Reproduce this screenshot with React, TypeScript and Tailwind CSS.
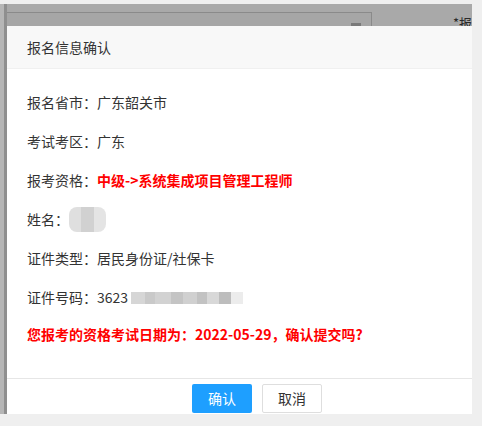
const font = { fontFamily: '"Noto Sans CJK SC", "Liberation Sans", sans-serif' };

const Row = ({ label, children }: { label: string; children: React.ReactNode }) => (
  <div className="flex h-[39px] items-center text-[14px] text-[#333]">
    <span>{label}</span>
    {children}
  </div>
);

export default function App() {
  return (
    <div className="flex h-[426px] w-[482px] flex-col bg-[#efefef]" style={font}>
      <div className="h-[4px] shrink-0" />
      <div className="flex h-[410px] shrink-0">
        {/* shaded page behind the layer */}
        <div className="relative flex w-[472px]">
          <div className="w-[4px] bg-[#b6b6b6]" />
          <div className="w-[3px] bg-[#8f8f8f]" />
          <div className="flex flex-1 items-start bg-[#a9a9a9] pt-[8px]">
            <div className="relative h-[40px] w-[365px] border-t border-r border-[#8a8a8a] bg-[#a6a6a6]">
              <div className="absolute top-[10px] right-[10px] h-[3px] w-[10px] bg-[#7a7a7a]" />
            </div>
            <div className="ml-auto pt-[4px] text-[13px] leading-none text-[#2a2a2a]">*报</div>
          </div>

          {/* dialog */}
          <div className="absolute top-[22px] left-[7px] flex h-[388px] w-[465px] flex-col overflow-hidden bg-white">
            <div className="h-[43px] shrink-0 border-b border-[#f0f0f0] bg-[#f8f8f8] pl-[20px] text-[14px] leading-[43px] text-[#333]">
              报名信息确认
            </div>
            <div className="flex flex-1 flex-col px-[20px] pt-[14px]">
              <Row label="报名省市：">
                <span>广东韶关市</span>
              </Row>
              <Row label="考试考区：">
                <span>广东</span>
              </Row>
              <Row label="报考资格：">
                <span className="font-bold text-[#ff0000]">中级-&gt;系统集成项目管理工程师</span>
              </Row>
              <Row label="姓名：">
                <span className="flex h-[25px] w-[37px] overflow-hidden rounded-[8px] opacity-90">
                  <span className="w-[12px] bg-[#dcdcdc]" />
                  <span className="w-[13px] bg-[#cdcdcd]" />
                  <span className="w-[12px] bg-[#e2e2e2]" />
                </span>
              </Row>
              <Row label="证件类型：">
                <span>居民身份证/社保卡</span>
              </Row>
              <Row label="证件号码：">
                <span>3623</span>
                <span className="ml-[3px] flex h-[12px] w-[112px]">
                  <span className="w-[14px] bg-[#d6d6d6]" />
                  <span className="w-[10px] bg-[#c9c9c9]" />
                  <span className="w-[16px] bg-[#d2d2d2]" />
                  <span className="w-[12px] bg-[#c4c4c4]" />
                  <span className="w-[14px] bg-[#d0d0d0]" />
                  <span className="w-[10px] bg-[#c2c2c2]" />
                  <span className="w-[12px] bg-[#d8d8d8]" />
                  <span className="w-[12px] bg-[#bdbdbd]" />
                  <span className="w-[12px] bg-[#ececec]" />
                </span>
              </Row>
              <div className="flex h-[35px] items-center text-[14px] font-bold text-[#ff0000]">
                您报考的资格考试日期为：2022-05-29，确认提交吗?
              </div>
            </div>
            <div className="flex h-[36px] shrink-0 gap-[10px] border-t border-[#e6e6e6] pt-[5px] pl-[185px]">
              <button className="h-[29px] w-[60px] rounded-[2px] bg-[#1e9fff] text-[14px] text-white">
                确认
              </button>
              <button className="h-[29px] w-[60px] rounded-[2px] border border-[#dedede] bg-white text-[14px] text-[#333]">
                取消
              </button>
            </div>
          </div>
        </div>
        <div className="flex-1" />
      </div>
    </div>
  );
}
